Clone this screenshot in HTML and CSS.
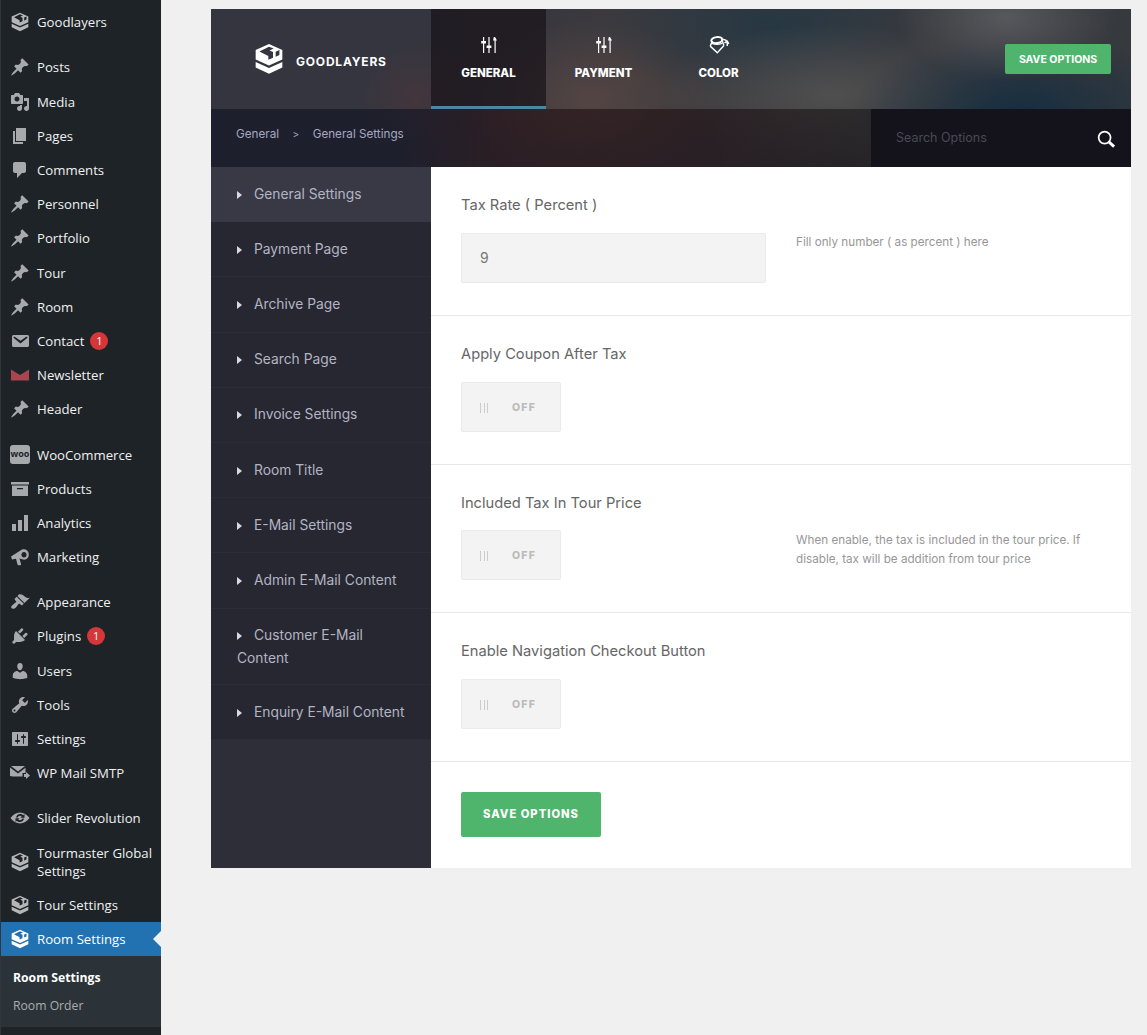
FILE: index.html
```html
<!DOCTYPE html>
<html lang="en">

<head>
    <meta charset="UTF-8">
    <meta name="viewport" content="width=device-width, initial-scale=1.0">
    <title>Room Settings</title>
    <link rel="stylesheet" href="styles.css">
</head>

<body>
    <svg class="icon-defs" aria-hidden="true">
        <symbol id="i-gdl" viewBox="0 0 24 24">
            <path fill-rule="evenodd" d="M12 .8L22 5.300V12.300L12 16.800 2 12.300V5.300zM4.800 6.300L11.500 9.800V12.500L15 11V6.800L12.400 5.600 15.500 4.200 12 2.800zM17 6.500V10.300L19.800 9V5.300z"/>
            <path d="M2 14.200l10 4.500 10-4.500v4.200L12 23 2 18.400z"/>
        </symbol>
        <symbol id="i-pin" viewBox="0 0 20 20"><path d="M10.440 3.020l1.820-1.820 6.360 6.350-1.830 1.820c-1.050-.68-2.480-.57-3.410.36l-.75.75c-.92.93-1.040 2.350-.35 3.410l-1.830 1.820-2.410-2.410-2.800 2.790c-.42.42-3.380 2.710-3.800 2.290s1.860-3.390 2.280-3.810l2.790-2.790L4.100 9.360l1.830-1.820c1.050.69 2.480.57 3.400-.36l.75-.75c.93-.92 1.050-2.350.36-3.410z"/></symbol>
        <symbol id="i-mail" viewBox="0 0 20 20"><path d="M3.870 4h13.250C18.370 4 19 4.590 19 5.790v8.420c0 1.190-.63 1.790-1.880 1.790H3.870c-1.250 0-1.880-.6-1.880-1.790V5.790c0-1.200.63-1.790 1.880-1.790zm6.620 8.600l6.740-5.530c.24-.2.43-.66.13-1.070-.29-.41-.82-.42-1.170-.17l-5.700 3.860L4.800 5.830c-.35-.25-.88-.24-1.170.17-.3.41-.11.87.13 1.070z"/></symbol>
        <symbol id="i-sliders" viewBox="0 0 18 18">
            <path d="M3 1h1.200v4H6v2.500H4.200V17H3V7.500H1.200V5H3zM8.400 1h1.200v8.500h1.800V12H9.600v5H8.400v-5H6.600V9.500h1.800zM13.800 1h1.200l2 3.500h-1.300V17h-1.200V4.500h-1.400z"/>
        </symbol>
    </svg>

    <div class="page">
        <nav class="adminmenu">
            <ul class="menu-group">
                <li class="menu-item"><svg class="menu-icon gdl"><use href="#i-gdl"/></svg>Goodlayers</li>
            </ul>
            <ul class="menu-group">
                <li class="menu-item"><svg class="menu-icon"><use href="#i-pin"/></svg>Posts</li>
                <li class="menu-item"><svg class="menu-icon" viewBox="0 0 20 20"><path d="M13 11V4c0-.55-.45-1-1-1h-1.670L9 1H5L3.670 3H2c-.55 0-1 .45-1 1v7c0 .55.45 1 1 1h10c.55 0 1-.45 1-1zM7 4.500c1.380 0 2.500 1.120 2.500 2.500S8.380 9.500 7 9.500 4.500 8.380 4.500 7 5.620 4.500 7 4.500zM14 6h5v10.500c0 1.380-1.120 2.500-2.500 2.500S14 17.880 14 16.500s1.120-2.500 2.500-2.500c.17 0 .34.02.5.05V9h-3V6zm-4 8.050V13h2v3.500c0 1.380-1.120 2.500-2.500 2.500S7 17.880 7 16.500 8.120 14 9.500 14c.17 0 .34.02.5.05z"/></svg>Media</li>
                <li class="menu-item"><svg class="menu-icon" viewBox="0 0 20 20"><path d="M6 15V2h10v13H6zm-1 1h8v2H3V5h2v11z"/></svg>Pages</li>
                <li class="menu-item"><svg class="menu-icon" viewBox="0 0 20 20"><path d="M5 2h9c1.100 0 2 .9 2 2v7c0 1.100-.9 2-2 2h-2l-5 5v-5H5c-1.100 0-2-.9-2-2V4c0-1.100.9-2 2-2z"/></svg>Comments</li>
                <li class="menu-item"><svg class="menu-icon"><use href="#i-pin"/></svg>Personnel</li>
                <li class="menu-item"><svg class="menu-icon"><use href="#i-pin"/></svg>Portfolio</li>
                <li class="menu-item"><svg class="menu-icon"><use href="#i-pin"/></svg>Tour</li>
                <li class="menu-item"><svg class="menu-icon"><use href="#i-pin"/></svg>Room</li>
                <li class="menu-item"><svg class="menu-icon"><use href="#i-mail"/></svg>Contact<span class="count">1</span></li>
                <li class="menu-item"><svg class="menu-icon newsletter" viewBox="0 0 20 20"><path d="M1 4.500l9 5.500 9-5.500V15.500H1z"/></svg>Newsletter</li>
                <li class="menu-item"><svg class="menu-icon"><use href="#i-pin"/></svg>Header</li>
            </ul>
            <ul class="menu-group">
                <li class="menu-item"><span class="woo-icon">woo</span>WooCommerce</li>
                <li class="menu-item"><svg class="menu-icon" viewBox="0 0 20 20"><path d="M1 3h18v2.500H1zM2 6.500h16V17H2zM7 9v1.200h6V9z"/></svg>Products</li>
                <li class="menu-item"><svg class="menu-icon" viewBox="0 0 20 20"><path d="M2 11h4v7H2zM8 7h4v11H8zM14 2h4v16h-4z"/></svg>Analytics</li>
                <li class="menu-item"><svg class="menu-icon" viewBox="0 0 20 20"><path fill-rule="evenodd" d="M1 9.500L12 2.500c3-1.200 6.500.8 6.800 4.500.3 3.800-2.700 6.300-5.800 5.500l-3.500-1 1.500 5.500c.2.700-.3 1.300-1 1.300H8.500c-.5 0-.9-.3-1-.8L6 11.800 2 12.500zM14 5c-1.500 0-2.600 1.200-2.600 2.800s1.100 2.800 2.600 2.800 2.600-1.200 2.600-2.800S15.500 5 14 5z"/></svg>Marketing</li>
            </ul>
            <ul class="menu-group">
                <li class="menu-item"><svg class="menu-icon" viewBox="0 0 20 20"><path d="M14.480 11.060L7.410 3.990l1.500-1.500c.5-.56 2.300-.47 3.510.32 1.210.8 1.430 1.280 2.910 2.100 1.180.64 2.450 1.260 4.450.85zm-.71.71L6.700 4.700 4.930 6.470c-.39.39-.39 1.020 0 1.410l1.060 1.060c.39.39.39 1.030 0 1.420-.6.6-1.430 1.110-2.210 1.690-.35.26-.7.53-1.010.84C1.430 13.230.65 15.300 1.650 16.300c1 1 3.070.22 4.410-1.120.31-.31.58-.66.84-1.010.58-.78 1.090-1.610 1.690-2.210.39-.39 1.030-.39 1.420 0l1.060 1.060c.39.39 1.020.39 1.410 0z"/></svg>Appearance</li>
                <li class="menu-item"><svg class="menu-icon" viewBox="0 0 20 20"><path d="M13.110 4.360L9.870 7.600 8 5.730l3.240-3.240c.35-.34 1.050-.2 1.560.32.52.51.66 1.210.31 1.550zm-8 1.770l.91-1.120 9.010 9.010-1.190.84c-.71.71-2.630 1.160-3.820 1.160H6.140L4.900 17.260c-.59.59-1.540.59-2.120 0-.59-.58-.59-1.530 0-2.120l1.240-1.240v-3.880c0-1.130.4-3.190 1.090-3.890zm7.260 3.970l3.240-3.240c.34-.35 1.040-.21 1.550.31.52.51.66 1.210.31 1.550l-3.240 3.250z"/></svg>Plugins<span class="count">1</span></li>
                <li class="menu-item"><svg class="menu-icon" viewBox="0 0 20 20"><path d="M10 9.250c-2.270 0-2.730-3.440-2.730-3.440C7 4.020 7.820 2 9.970 2c2.160 0 2.980 2.020 2.710 3.810 0 0-.41 3.440-2.680 3.440zm0 2.570L12.720 10c2.390 0 4.520 2.330 4.520 4.530v2.490s-3.650 1.130-7.240 1.130c-3.650 0-7.240-1.130-7.240-1.130v-2.490c0-2.250 1.940-4.480 4.470-4.480z"/></svg>Users</li>
                <li class="menu-item"><svg class="menu-icon" viewBox="0 0 20 20"><path d="M16.680 9.770c-1.340 1.340-3.300 1.670-4.950.99l-5.410 6.520c-.99.99-2.590.99-3.580 0s-.99-2.590 0-3.570l6.520-5.420c-.68-1.650-.35-3.610.99-4.950 1.280-1.280 3.120-1.620 4.720-1.060l-2.890 2.890 2.820 2.820 2.860-2.870c.53 1.580.18 3.390-1.080 4.650zM3.810 16.210c.4.39 1.040.39 1.430 0 .4-.4.4-1.040 0-1.430-.39-.4-1.030-.4-1.430 0-.39.39-.39 1.030 0 1.430z"/></svg>Tools</li>
                <li class="menu-item"><svg class="menu-icon" viewBox="0 0 20 20"><path d="M18 16V4c0-.55-.45-1-1-1H3c-.55 0-1 .45-1 1v12c0 .55.45 1 1 1h14c.55 0 1-.45 1-1zM8 11h1c.55 0 1 .45 1 1s-.45 1-1 1H8v1.500c0 .28-.22.5-.5.5s-.5-.22-.5-.5V13H6c-.55 0-1-.45-1-1s.45-1 1-1h1V5.500c0-.28.22-.5.5-.5s.5.22.5.5V11zm5-2h-1c-.55 0-1-.45-1-1s.45-1 1-1h1V5.500c0-.28.22-.5.5-.5s.5.22.5.5V7h1c.55 0 1 .45 1 1s-.45 1-1 1h-1v5.500c0 .28-.22.5-.5.5s-.5-.22-.5-.5V9z"/></svg>Settings</li>
                <li class="menu-item"><svg class="menu-icon" viewBox="0 0 20 20"><path d="M1 3h14l-7 5.500zM0 4.500l8 6 7.500-5.800V10h-3v3.500H3L0 13zM14 11h2V9l4 3.500-4 3.500v-2h-2z"/></svg>WP Mail SMTP</li>
            </ul>
            <ul class="menu-group">
                <li class="menu-item"><svg class="menu-icon" viewBox="0 0 20 20"><path d="M10 4.500c3.700 0 7 2.200 9.500 5.500-2.500 3.300-5.800 5.500-9.500 5.500S3 13.300.5 10C3 6.700 6.300 4.500 10 4.500zM6 9.500h1.700C8 8.500 9 7.800 10 7.800c.7 0 1.300.3 1.700.8l-1.200 1.100H14.500V6l-1.200 1.200C12.500 6.400 11.300 5.900 10 5.900 8 5.900 6.400 7.400 6 9.500zm8 1h-1.700c-.3 1-1.300 1.700-2.300 1.700-.7 0-1.300-.3-1.700-.8l1.200-1.100H5.500V14l1.200-1.200c.8.800 2 1.300 3.300 1.300 2 0 3.600-1.500 4-3.600z"/></svg>Slider Revolution</li>
                <li class="menu-item two-line"><svg class="menu-icon gdl"><use href="#i-gdl"/></svg><span>Tourmaster Global Settings</span></li>
                <li class="menu-item"><svg class="menu-icon gdl"><use href="#i-gdl"/></svg>Tour Settings</li>
                <li class="menu-item current"><svg class="menu-icon gdl"><use href="#i-gdl"/></svg>Room Settings</li>
            </ul>
            <ul class="submenu">
                <li class="submenu-item active">Room Settings</li>
                <li class="submenu-item">Room Order</li>
            </ul>
        </nav>

        <main class="content">
            <div class="options-panel">
                <header class="panel-head">
                    <div class="head-top">
                        <div class="brand">
                            <svg class="brand-logo"><use href="#i-gdl"/></svg>
                            <span>GOODLAYERS</span>
                        </div>
                        <div class="tab active">
                            <svg class="tab-icon"><use href="#i-sliders"/></svg>
                            <span>GENERAL</span>
                        </div>
                        <div class="tab">
                            <svg class="tab-icon"><use href="#i-sliders"/></svg>
                            <span>PAYMENT</span>
                        </div>
                        <div class="tab">
                            <svg class="tab-icon color" viewBox="0 0 20 16" fill="none" stroke="#fff" stroke-width="1.300"><path d="M2 9l6.500 6 6-6.500M2 9l2-4.500M13 4.500l1.500 4"/><ellipse cx="8" cy="3.500" rx="5" ry="2.700" stroke-width="1.800" transform="rotate(-8 8 3.500)"/><path d="M3.500 6.500c3 1.200 6.500 1 9.500 0M12 3.800c2-1.200 4.200-.8 5.500 1.200v4M15 6l2.500-1.500L19 7"/></svg>
                            <span>COLOR</span>
                        </div>
                        <a class="save-small" href="javascript:;">SAVE OPTIONS</a>
                    </div>
                    <div class="head-bottom">
                        <div class="breadcrumb">
                            <span>General</span>
                            <span class="crumb-sep">&gt;</span>
                            <span>General Settings</span>
                        </div>
                        <div class="search">
                            <span class="search-text">Search Options</span>
                            <svg class="search-icon" viewBox="0 0 20 20" fill="none" stroke="#fff"><circle cx="8" cy="8" r="6.300" stroke-width="1.800"/><path d="M12.500 12.500l5.500 5" stroke-width="3"/></svg>
                        </div>
                    </div>
                </header>

                <div class="panel-body">
                    <ul class="side-nav">
                        <li class="side-item active">General Settings</li>
                        <li class="side-item">Payment Page</li>
                        <li class="side-item">Archive Page</li>
                        <li class="side-item">Search Page</li>
                        <li class="side-item">Invoice Settings</li>
                        <li class="side-item">Room Title</li>
                        <li class="side-item">E-Mail Settings</li>
                        <li class="side-item">Admin E-Mail Content</li>
                        <li class="side-item wrapped">Customer E-Mail Content</li>
                        <li class="side-item">Enquiry E-Mail Content</li>
                    </ul>

                    <div class="options">
                        <section class="option">
                            <h3 class="option-title">Tax Rate ( Percent )</h3>
                            <div class="option-row">
                                <div class="text-input">9</div>
                                <p class="option-desc">Fill only number ( as percent ) here</p>
                            </div>
                        </section>
                        <section class="option">
                            <h3 class="option-title">Apply Coupon After Tax</h3>
                            <div class="option-row">
                                <div class="toggle"><span class="toggle-grip"></span>OFF</div>
                            </div>
                        </section>
                        <section class="option short">
                            <h3 class="option-title">Included Tax In Tour Price</h3>
                            <div class="option-row">
                                <div class="toggle"><span class="toggle-grip"></span>OFF</div>
                                <p class="option-desc wide">When enable, the tax is included in the tour price. If disable, tax will be addition from tour price</p>
                            </div>
                        </section>
                        <section class="option">
                            <h3 class="option-title">Enable Navigation Checkout Button</h3>
                            <div class="option-row">
                                <div class="toggle"><span class="toggle-grip"></span>OFF</div>
                            </div>
                        </section>
                        <div class="options-foot">
                            <a class="save-big" href="javascript:;">SAVE OPTIONS</a>
                        </div>
                    </div>
                </div>
            </div>
        </main>
    </div>
</body>

</html>
```

FILE: styles.css
```css
* {
    margin: 0;
    padding: 0;
    box-sizing: border-box;
}

html,
body {
    height: 1035px;
    overflow: hidden;
}

body {
    background-color: #f0f0f1;
    font-family: Inter, "Liberation Sans", sans-serif;
}

ul {
    list-style: none;
}

a {
    text-decoration: none;
}

.icon-defs {
    display: none;
}

.page {
    display: flex;
    height: 1035px;
}

/* wordpress menu */
.adminmenu {
    width: 161px;
    flex-shrink: 0;
    background-color: #1d2327;
    border-left: 1px solid #30363b;
    padding-top: 5.2px;
    font-family: "Open Sans", "Liberation Sans", sans-serif;
    font-size: 13.2px;
    color: #f0f0f1;
}

.menu-group {
    margin-bottom: 11px;
}

.menu-group:nth-child(5) {
    margin-bottom: 0;
}

.menu-item {
    position: relative;
    display: flex;
    align-items: center;
    height: 34.2px;
    padding-left: 9px;
    line-height: 18px;
}

.menu-item.two-line {
    height: 52px;
}

.menu-icon {
    width: 20px;
    height: 20px;
    margin-right: 7px;
    flex-shrink: 0;
    fill: #a7aaad;
}

.menu-icon.gdl {
    fill: #b4b6b8;
}

.menu-icon.newsletter {
    fill: #a8454e;
}

.woo-icon {
    width: 20px;
    height: 19px;
    margin-right: 7px;
    flex-shrink: 0;
    background-color: #a7aaad;
    border-radius: 3px;
    color: #1d2327;
    font-size: 9px;
    font-weight: 700;
    line-height: 18px;
    text-align: center;
}

.count {
    width: 18px;
    height: 18px;
    margin-left: 6px;
    background-color: #d63638;
    border-radius: 50%;
    color: #fff;
    font-size: 11px;
    line-height: 18px;
    text-align: center;
}

.menu-item.current {
    background-color: #2271b1;
    color: #fff;
}

.menu-item.current .menu-icon {
    fill: #fff;
}

.menu-item.current::after {
    content: "";
    position: absolute;
    right: 0;
    top: 9px;
    border: 8px solid transparent;
    border-right-color: #f0f0f1;
}

.submenu {
    height: 71px;
    padding-top: 8px;
    background-color: #2c3338;
    font-size: 12.2px;
}

.submenu-item {
    height: 28px;
    padding-left: 12px;
    line-height: 28px;
    color: #a9adb1;
}

.submenu-item.active {
    color: #fff;
    font-weight: 700;
}

/* options panel */
.content {
    flex: 1;
    padding: 9px 16px 0 50px;
}

.options-panel {
    width: 920px;
}

.panel-head {
    background-color: #302f37;
    background-image:
        radial-gradient(ellipse 110px 65px at 795px 8px, rgba(95, 95, 100, .8), transparent),
        radial-gradient(ellipse 170px 80px at 810px 105px, rgba(20, 45, 65, .95), transparent),
        radial-gradient(ellipse 170px 70px at 620px 85px, rgba(90, 88, 86, .7), transparent),
        radial-gradient(ellipse 170px 80px at 560px 15px, rgba(35, 55, 68, .85), transparent),
        radial-gradient(ellipse 130px 80px at 380px 90px, rgba(90, 72, 68, .8), transparent),
        radial-gradient(ellipse 60px 60px at 205px 90px, rgba(90, 55, 55, .4), transparent),
        linear-gradient(90deg, #34353f 0, #34353f 220px, #3c3a3e 420px, #36393d 100%);
}

.head-top {
    display: flex;
    align-items: stretch;
    height: 100px;
}

.brand {
    display: flex;
    align-items: center;
    width: 220px;
    padding-left: 42px;
    color: #fff;
    font-size: 12px;
    font-weight: 700;
    letter-spacing: .8px;
}

.brand span {
    margin-top: 4px;
}

.brand-logo {
    width: 32px;
    height: 34px;
    margin-right: 11px;
    fill: #fff;
}

.tab {
    width: 115px;
    padding-top: 27px;
    border-bottom: 3px solid transparent;
    color: #fff;
    font-size: 11.5px;
    font-weight: 800;
    text-align: center;
}

.tab span {
    display: block;
    margin-top: 9px;
}

.tab.active {
    background-color: rgba(25, 20, 25, .72);
    border-bottom-color: #4a87a3;
}

.tab-icon {
    width: 18px;
    height: 18px;
    fill: #fff;
}

.tab-icon.color {
    width: 22px;
    fill: none;
}

.save-small {
    align-self: flex-start;
    width: 106px;
    height: 30px;
    margin: 35px 20px 0 auto;
    background-color: #4fb56d;
    border-radius: 2px;
    color: #fff;
    font-size: 10.5px;
    font-weight: 700;
    line-height: 31px;
    text-align: center;
}

.head-bottom {
    display: flex;
    height: 58px;
    background: linear-gradient(90deg, rgba(25, 26, 40, .8) 0, rgba(25, 26, 40, .8) 190px, rgba(35, 15, 20, .62) 280px, rgba(30, 15, 20, .62) 480px, rgba(25, 22, 24, .6) 660px);
}

.breadcrumb {
    flex: 1;
    display: flex;
    gap: 13.5px;
    padding: 18px 0 0 25px;
    color: #a4a7c0;
    font-size: 11.7px;
    line-height: 14px;
}

.crumb-sep {
    font-size: 10px;
}

.search {
    display: flex;
    justify-content: space-between;
    width: 260px;
    padding: 21px 15px 0 25px;
    background-color: #14131b;
    color: #4a4a52;
    font-size: 12.5px;
}

.search-icon {
    width: 19px;
    height: 19px;
}

.panel-body {
    display: flex;
}

.side-nav {
    width: 220px;
    flex-shrink: 0;
    background-color: #2d2e38;
}

.side-item {
    padding: 15.6px 25px 15.6px 26px;
    background-color: #262730;
    border-bottom: 1px solid #2b2c36;
    color: #b3b4c4;
    font-size: 13.8px;
    line-height: 23px;
}

.side-item.wrapped {
    padding-bottom: 14.2px;
}

.side-item::before {
    content: "";
    display: inline-block;
    margin-right: 12px;
    border-left: 5px solid #d8d9e6;
    border-top: 4px solid transparent;
    border-bottom: 4px solid transparent;
}

.side-item.active {
    background-color: #383945;
    border-bottom-color: #383945;
}

.options {
    flex: 1;
    background-color: #fff;
}

.option {
    height: 149px;
    padding: 30px 30px 0;
    border-bottom: 1px solid #e8e8e8;
}

.option.short {
    height: 148px;
}

.option.short .toggle {
    margin-top: -1px;
}

.option-title {
    margin-bottom: 19px;
    color: #666;
    font-size: 14.7px;
    font-weight: 400;
    line-height: 17px;
}

.option-row {
    display: flex;
    align-items: flex-start;
}

.text-input {
    width: 305px;
    height: 50px;
    padding-left: 18px;
    background-color: #f3f3f3;
    border: 1px solid #eaeaea;
    border-radius: 2px;
    color: #777;
    font-size: 14px;
    line-height: 48px;
}

.toggle {
    display: flex;
    align-items: center;
    width: 100px;
    height: 50px;
    padding-left: 18px;
    padding-top: 1px;
    background-color: #f3f3f3;
    border: 1px solid #eaeaea;
    border-radius: 2px;
    color: #bbb;
    font-size: 10.5px;
    font-weight: 800;
    letter-spacing: 1.2px;
}

.toggle-grip {
    width: 8px;
    height: 10px;
    margin-right: 24px;
    border-left: 1px solid #ccc;
    border-right: 1px solid #ccc;
    background: linear-gradient(90deg, transparent 2.5px, #ccc 2.5px, #ccc 3.5px, transparent 3.5px);
}

.option-desc {
    width: 295px;
    margin-left: 30px;
    color: #979797;
    font-size: 11.7px;
    line-height: 19px;
}

.option-desc.wide {
    margin-left: 235px;
}

.options-foot {
    height: 106px;
    padding: 30px;
}

.save-big {
    display: block;
    width: 140px;
    height: 45px;
    background-color: #4fb56d;
    border-radius: 2px;
    color: #fff;
    font-size: 11.2px;
    font-weight: 800;
    letter-spacing: 1px;
    line-height: 44px;
    text-align: center;
}
```
